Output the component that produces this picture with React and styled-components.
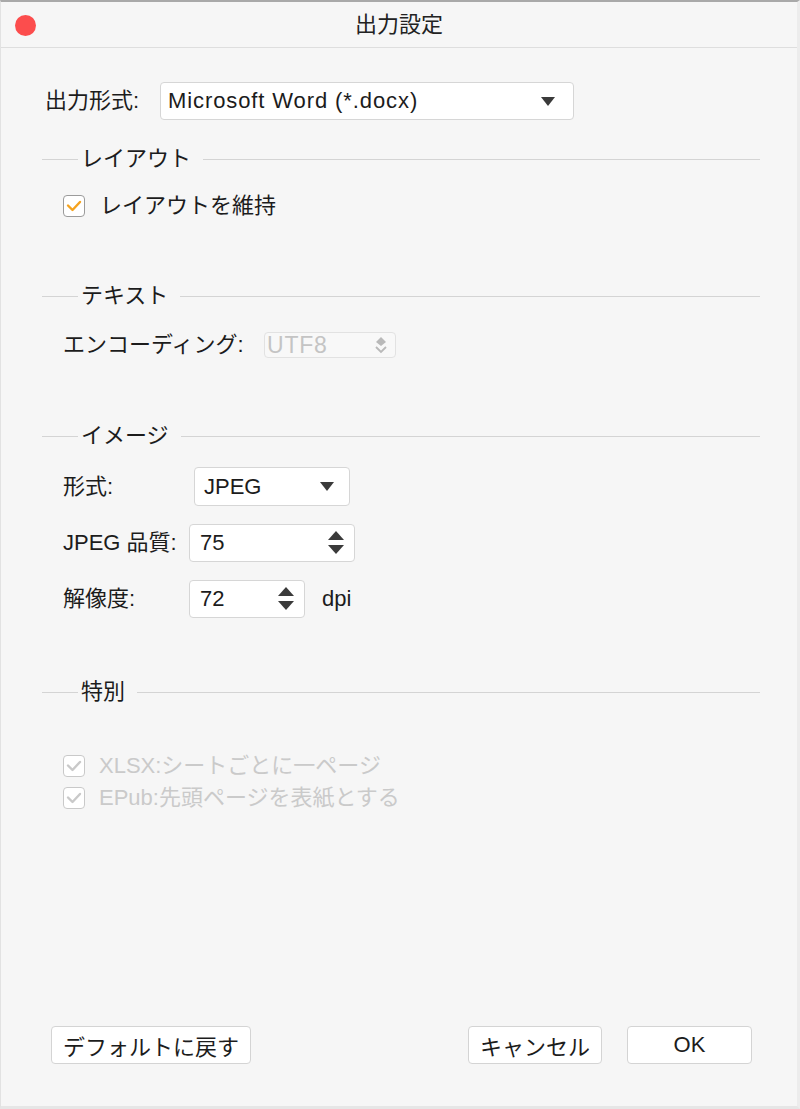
import React from "react";
import styled, { createGlobalStyle } from "styled-components";

const GlobalStyle = createGlobalStyle`
    html, body {
        margin: 0;
        padding: 0;
        background: #ffffff;
    }
    * {
        box-sizing: border-box;
    }
`

const Window = styled.div`
    width: 800px;
    height: 1109px;
    display: flex;
    flex-direction: column;
    background: #f6f6f6;
    border-top: 2px solid #a9a9a9;
    border-left: 1px solid #e2e2e2;
    border-right: 3px solid #ececec;
    border-bottom: 3px solid #e6e6e6;
    font-family: "Liberation Sans", "Noto Sans CJK JP", sans-serif;
    font-size: 22px;
    line-height: 24px;
    color: #1c1c1c;
`

const TitleBar = styled.div`
    height: 46px;
    flex-shrink: 0;
    display: flex;
    align-items: center;
    justify-content: center;
    position: relative;
    border-bottom: 1px solid #dedede;
    color: #222;
`

const CloseDot = styled.span`
    position: absolute;
    left: 14px;
    top: 13px;
    width: 21px;
    height: 21px;
    border-radius: 50%;
    background: #fc4d4d;
`

const Content = styled.div`
    flex: 1;
    display: flex;
    flex-direction: column;
    padding: 34px 37px 42px 41px;
`

const Row = styled.div`
    display: flex;
    align-items: center;
    gap: ${(p) => p.$gap || 0}px;
    margin-top: ${(p) => p.$top || 0}px;
    padding-left: ${(p) => p.$indent || 0}px;
`

const Label = styled.span`
    width: ${(p) => (p.$w ? `${p.$w}px` : "auto")};
    flex-shrink: 0;
    white-space: nowrap;
`

const Header = styled.div`
    display: flex;
    align-items: center;
    height: 24px;
    margin-top: ${(p) => p.$top}px;
    &::before {
        content: "";
        width: 36px;
        height: 1px;
        background: #d4d4d4;
        margin-right: 3px;
    }
    &::after {
        content: "";
        flex: 1;
        height: 1px;
        background: #d4d4d4;
        margin-left: 12px;
    }
`

const Field = styled.div`
    width: ${(p) => p.$w}px;
    height: ${(p) => p.$h || 38}px;
    display: flex;
    align-items: center;
    justify-content: space-between;
    padding: 0 ${(p) => p.$pr || 18}px 0 ${(p) => p.$pl || 7}px;
    background: ${(p) => (p.$disabled ? "#f8f8f8" : "#ffffff")};
    border: 1px solid ${(p) => (p.$disabled ? "#e2e2e2" : "#d6d6d6")};
    border-radius: 4px;
    color: ${(p) => (p.$disabled ? "#c4c4c4" : "#1c1c1c")};
    font-size: ${(p) => p.$fs || 22}px;
    letter-spacing: ${(p) => p.$ls || 0}px;
`

const Check = styled.span`
    width: 22px;
    height: 22px;
    flex-shrink: 0;
    display: flex;
    align-items: center;
    justify-content: center;
    background: #ffffff;
    border: 1.5px solid ${(p) => (p.$disabled ? "#c9c9c9" : "#9b9b9b")};
    border-radius: 4px;
`

const CheckText = styled.span`
    color: ${(p) => (p.$disabled ? "#cacaca" : "#1c1c1c")};
    white-space: nowrap;
`

const Footer = styled.div`
    margin-top: auto;
    display: flex;
    align-items: center;
    padding-left: 9px;
`

const Button = styled.button`
    width: ${(p) => p.$w}px;
    height: 38px;
    margin-left: ${(p) => p.$ml || 0}px;
    background: #ffffff;
    border: 1px solid #d4d4d4;
    border-radius: 4px;
    font-family: inherit;
    font-size: 22px;
    color: #1c1c1c;
    padding: 0;
`

const DownArrow = () => (
    <svg width="14" height="9" viewBox="0 0 14 9">
        <path d="M0 0 H14 L7 9 Z" fill="#3a3a3a" />
    </svg>
)

const SpinArrows = () => (
    <svg width="16" height="24" viewBox="0 0 16 24">
        <path d="M8 0 L16 9 H0 Z" fill="#3a3a3a" />
        <path d="M0 14 H16 L8 23 Z" fill="#3a3a3a" />
    </svg>
)

const SmallUpDown = () => (
    <svg width="12" height="18" viewBox="0 0 12 18">
        <path d="M6 1 L11 6 L6 10 L1 6 Z" fill="#b9b9b9" />
        <path d="M1 11 L6 16 L11 11" fill="none" stroke="#b9b9b9" strokeWidth="1.8" />
    </svg>
)

const Tick = ({ color }) => (
    <svg width="16" height="12" viewBox="0 0 16 12">
        <path d="M2 5.5 L6.5 10 L14 2" fill="none" stroke={color} strokeWidth="2.4" strokeLinecap="round" strokeLinejoin="round" />
    </svg>
)

const App = () => {
    return (
        <>
            <GlobalStyle />
            <Window>
                <TitleBar>
                    <CloseDot />
                    出力設定
                </TitleBar>
                <Content>
                    <Row $indent={3}>
                        <Label $w={115}>出力形式:</Label>
                        <Field $w={414} $fs={22} $ls={0.9}>
                            Microsoft Word (*.docx)
                            <DownArrow />
                        </Field>
                    </Row>

                    <Header $top={27}>レイアウト</Header>
                    <Row $indent={21} $gap={15} $top={23}>
                        <Check><Tick color="#f5a31f" /></Check>
                        <CheckText>レイアウトを維持</CheckText>
                    </Row>

                    <Header $top={66}>テキスト</Header>
                    <Row $indent={21} $gap={0} $top={24}>
                        <Label $w={201}>エンコーディング:</Label>
                        <Field $w={132} $h={26} $pl={2} $pr={8} $fs={23} $ls={0.8} $disabled>
                            UTF8
                            <SmallUpDown />
                        </Field>
                    </Row>

                    <Header $top={66}>イメージ</Header>
                    <Row $indent={21} $top={19}>
                        <Label $w={131}>形式:</Label>
                        <Field $w={156} $h={39} $pl={9} $pr={15}>
                            JPEG
                            <DownArrow />
                        </Field>
                    </Row>
                    <Row $indent={21} $top={18}>
                        <Label $w={126}>JPEG 品質:</Label>
                        <Field $w={166} $pl={10} $pr={10}>
                            75
                            <SpinArrows />
                        </Field>
                    </Row>
                    <Row $indent={21} $top={18} $gap={17}>
                        <Label $w={109}>解像度:</Label>
                        <Field $w={116} $pl={10} $pr={10}>
                            72
                            <SpinArrows />
                        </Field>
                        <span>dpi</span>
                    </Row>

                    <Header $top={62}>特別</Header>
                    <Row $indent={21} $gap={14} $top={50}>
                        <Check $disabled><Tick color="#c9c9c9" /></Check>
                        <CheckText $disabled>XLSX:シートごとに一ページ</CheckText>
                    </Row>
                    <Row $indent={21} $gap={14} $top={8}>
                        <Check $disabled><Tick color="#c9c9c9" /></Check>
                        <CheckText $disabled>EPub:先頭ページを表紙とする</CheckText>
                    </Row>

                    <Footer>
                        <Button $w={200}>デフォルトに戻す</Button>
                        <Button $w={134} $ml={217}>キャンセル</Button>
                        <Button $w={125} $ml={25}>OK</Button>
                    </Footer>
                </Content>
            </Window>
        </>
    );
};

export default App;
